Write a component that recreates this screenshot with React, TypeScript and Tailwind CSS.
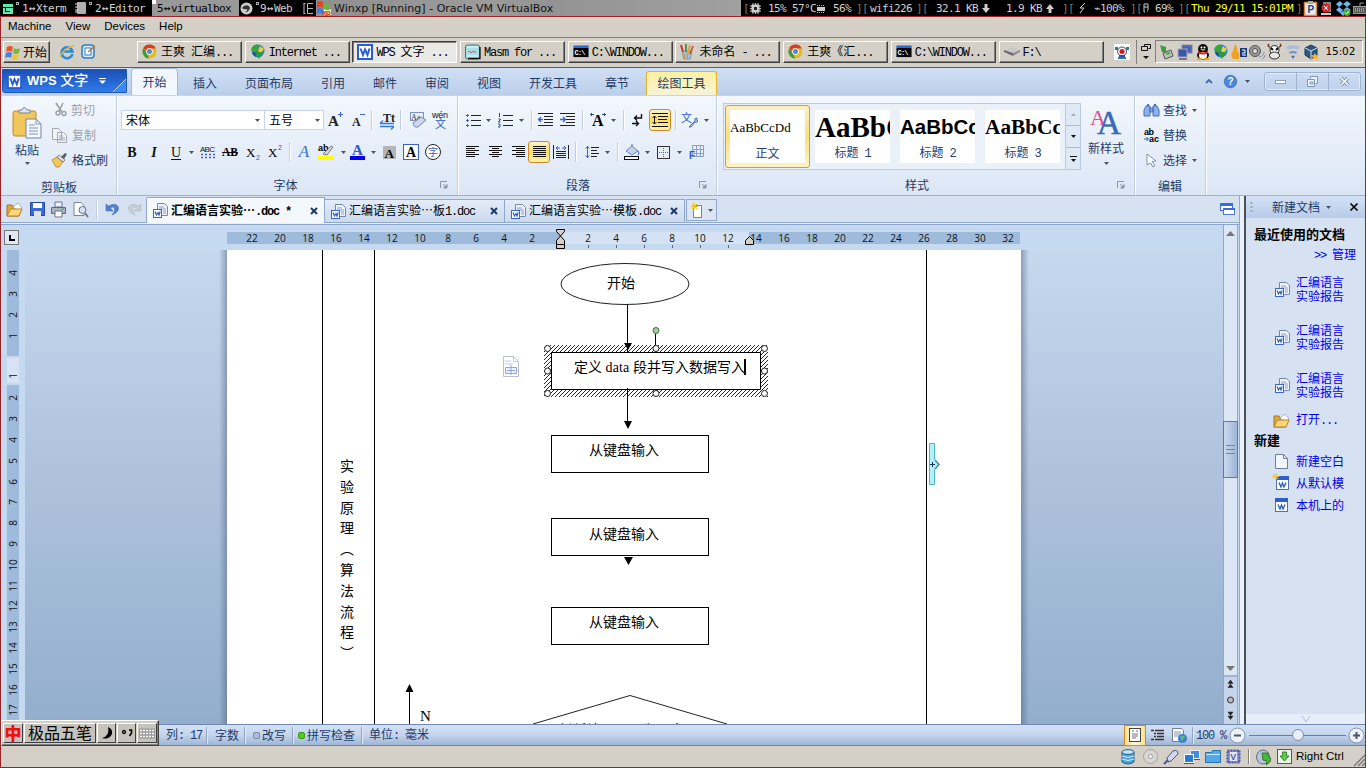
import React from 'react';

type P = { children?: React.ReactNode; className?: string };

/* Mixed CJK / half-width text: ASCII runs are set in a 6px-wide monospace. */
const Zh = ({ t, className = '' }: { t: string; className?: string }) => (
  <span className={`whitespace-pre leading-none shrink-0 text-[12px] font-['Noto_Sans_CJK_SC',sans-serif] ${className}`}>
    {(t.match(/[\x00-\x7f]+|[^\x00-\x7f]+/g) || []).map((r, i) =>
      r.charCodeAt(0) < 128 ? (
        <span key={i} className="font-['Liberation_Mono',monospace] text-[12px] tracking-[-1.2px]">{r}</span>
      ) : (
        <span key={i}>{r}</span>
      ),
    )}
  </span>
);
const Cell = ({ children, className = '' }: P) => <div className={`flex shrink-0 items-center ${className}`}>{children}</div>;
const Ic = ({ w, h, children, className = '' }: P & { w: number; h: number }) => (
  <svg width={w} height={h} viewBox={`0 0 ${w} ${h}`} className={`shrink-0 block overflow-visible ${className}`}>{children}</svg>
);
const Dn = ({ className = '' }: { className?: string }) => (
  <Ic w={5} h={3} className={className}><path d="M0 0h5L2.5 3z" fill="#4b5362" /></Ic>
);
const Sep = ({ className = '' }: { className?: string }) => <div className={`h-[20px] w-[2px] shrink-0 border-l border-[#c3cfe0] bg-white ${className}`} />;
const SERIF = 'Liberation Serif, serif';
const SANS = 'Liberation Sans, sans-serif';

/* ---------- shared icons ---------- */
const Chrome = () => (
  <Ic w={15} h={15}>
    <circle cx="7.5" cy="7.5" r="7" fill="#e0bb22" />
    <path d="M1.4 4A7 7 0 0 1 13.8 4.6H7.5z" fill="#d93a2b" />
    <path d="M1.4 4 5 9.6 7 14.5A7 7 0 0 1 1.4 4z" fill="#3f9b41" />
    <path d="M1.4 4 3 2.4 7.5 7.5H4.6z" fill="#d93a2b" />
    <circle cx="7.5" cy="7.5" r="3.3" fill="#fff" /><circle cx="7.5" cy="7.5" r="2.5" fill="#4a8be0" />
  </Ic>
);
const Globe = () => (
  <Ic w={16} h={15}>
    <circle cx="8" cy="7" r="6.5" fill="#2f7fd0" />
    <path d="M1 5Q4-1 9 1L8 6 4 9z" fill="#3aa63a" /><path d="M10 2l4 3-3 4-3-2z" fill="#f0d030" />
    <path d="M5 8h8L9 15z" fill="#2b9c36" /><path d="M2 9l4 4-1-5z" fill="#174b7c" />
  </Ic>
);
const WIcon = ({ s = 16 }: { s?: number }) => (
  <svg width={s} height={s} viewBox="0 0 16 16" className="block shrink-0">
    <rect width="16" height="16" fill="#2a5bd0" /><rect x="2" y="2" width="12" height="12" fill="#fff" />
    <path d="M3.500 4.500 6 11 8 5.500 10.500 11 12.500 4.500" fill="none" stroke="#2a5bd0" strokeWidth="2" />
  </svg>
);
const Cmd = () => (
  <Ic w={16} h={13}>
    <rect width="16" height="13" fill="#b9c3d0" /><rect x=".5" y=".5" width="15" height="2.500" fill="#2d6bd8" /><rect x=".5" y="3" width="15" height="9" fill="#000" />
    <text x="1.500" y="10" fontSize="7" fontWeight="bold" fill="#fff" fontFamily="Liberation Mono, monospace" textLength="11">C:\</text>
  </Ic>
);
const Note = () => (
  <Ic w={16} h={16}><rect x=".5" y="1" width="14" height="14" rx="2" fill="#a8dfe6" stroke="#3f7480" /><path d="M2 3h11M2 12h11" stroke="#e8fafa" /><path d="M3 8q1-2 2 0t2 0 2 0 2-1" fill="none" stroke="#b56a78" /><path d="M15 3v11.500H3" stroke="#111" fill="none" strokeWidth="1.300" /></Ic>
);
const Paint = () => (
  <Ic w={14} h={16}><path d="M2 7h10l-1.500 8h-7z" fill="#9cc3d8" stroke="#6a8ea3" strokeWidth=".7" /><path d="M3 8 1 1" stroke="#c0402c" strokeWidth="2" /><path d="M6 8V0" stroke="#3f7d3f" strokeWidth="1.600" /><path d="M8 9 10 1" stroke="#e2a33a" strokeWidth="2" /><path d="M10 10l3-8" stroke="#c04a2c" strokeWidth="1.600" /><path d="M4 9l1 6M8 9l-1 6" stroke="#e8862c" /></Ic>
);
const Disk = () => (
  <Ic w={16} h={9}><path d="M0 3 8 0l8 3-7 3z" fill="#c9c9c9" /><path d="M0 3v2l9 4V6z" fill="#6d6d6d" /><path d="M16 3v2L9 9V6z" fill="#8e8e8e" /></Ic>
);
const DocW = () => (
  <Ic w={15} h={15}>
    <path d="M4.500.5h7l3 3v9h-10z" fill="#eef3fc" stroke="#7288b3" /><path d="M6 4h5M6 6h7M10 8h3M10 10h3" stroke="#8aa0c8" />
    <rect x=".5" y="6.500" width="8" height="8" fill="#fff" stroke="#3a67c8" /><path d="M2 8.500l1.500 3.500L5 9.500 6 12l1.200-3.500" fill="none" stroke="#2e5cc4" strokeWidth="1.200" />
  </Ic>
);
const Folder = () => (
  <Ic w={17} h={15}>
    <path d="M1 3h5l1 2h6v9H1z" fill="#e0a73a" stroke="#a4741c" /><path d="M7 5l5-4 4 5-3 4z" fill="#fff" stroke="#8d99ad" strokeWidth=".7" />
    <path d="M1 14 4.500 7H16l-3 7z" fill="#fbd778" stroke="#b98224" />
  </Ic>
);
const Launch = () => <Ic w={8} h={8}><path d="M.5 7V.5H7" fill="none" stroke="#8d96a5" /><path d="M3 3l3 3M7 3.500V7H3.500z" stroke="#8d96a5" fill="#8d96a5" /></Ic>;

/* ---------- host top bar ---------- */
const top = "font-['DejaVu_Sans_Mono',monospace] text-[11px] tracking-[-0.62px] leading-none whitespace-pre text-[#d0d0d0]";
const Lr = () => <span className="inline-block w-[8px] text-center">↔</span>;
const TopBar = () => (
  <div className={`flex h-[16px] shrink-0 items-center overflow-hidden bg-black ${top}`}>
    <Cell className="w-[22px] pl-[3px]"><Ic w={10} h={11}><path d="M0 1h10v3H0zM3 5h7v6H7V8H3zM0 5h2v6H0zM0 9h10v2H0z" fill="#62e8b0" /></Ic><div className="mb-[9px] ml-[3px] h-[3px] w-[3px] border border-[#aaa]" /></Cell>
    <Cell className="w-[53px]">1<Lr />Xterm</Cell>
    <Cell className="w-[20px]"><Ic w={11} h={12}><rect x="2" width="9" height="12" rx="1" fill="#b0b0b0" /><path d="M0 2h3M0 5h3M0 8h3M0 10h3" stroke="#ddd" /></Ic><div className="mb-[9px] ml-[3px] h-[3px] w-[3px] border border-[#aaa]" /></Cell>
    <Cell className="w-[57px]">2<Lr />Editor</Cell>
    <Cell className="h-full w-[87px] bg-[#999] text-black"><div className="mb-[12px] h-[4px] w-[4px] bg-white" /><Cell className="pl-[1px]">5<Lr />virtualbox</Cell></Cell>
    <Cell className="w-[21px] pl-[1px]"><Ic w={13} h={13}><circle cx="6.500" cy="6.500" r="6" fill="#ccc" /><path d="M4 4q5-2 6 2-2 5-5 4 3-1 2-3-3 1-5-1z" fill="#333" /></Ic><div className="mb-[9px] ml-[3px] h-[3px] w-[3px] border border-[#aaa]" /></Cell>
    <Cell className="w-[43px]">9<Lr />Web</Cell>
    <Cell className="w-[13px]"><Ic w={11} h={11}><path d="M1 .5v10M4.500.5v10M4.500.5H10M4.500 5.500H10M4.500 10.500H10M.5.500h2M.5 10.500h2" stroke="#bbb" fill="none" /></Ic></Cell>
    <Cell className="h-full w-[425px] bg-[linear-gradient(90deg,#8f8f8f,#9c9c9c_40%,#939393_55%,#a0a0a0)]">
      <Ic w={16} h={16}><path d="M1 2q3-2 6 0v6q-3-2-6 0z" fill="#e0452c" /><path d="M8 3q3 2 6 0v6q-3 2-6 0z" fill="#6cb33f" /><path d="M1 9q3-2 6 0v5q-3-2-6 0z" fill="#3f7fe0" /><path d="M8 9q3 2 7 0v6H7z" fill="#f5e9c0" /><text x="6" y="15" fontSize="8" fontWeight="bold" fill="#d03018" fontFamily={SANS}>xp</text></Ic>
      <span className="pl-[2px] font-['DejaVu_Sans',sans-serif] text-[11px] tracking-[0.02px] text-[#111]">Winxp [Running] - Oracle VM VirtualBox</span>
    </Cell>
    <Cell className="w-[9px] pl-[2px] text-[#777]">[</Cell>
    <Cell className="w-[18px]"><Ic w={11} h={11}><path d="M3 0v11M5.500 0v11M8 0v11M0 3h11M0 5.500h11M0 8h11" stroke="#bbb" /><rect x="1.500" y="1.500" width="8" height="8" rx="1" fill="#ccc" /><rect x="4" y="4" width="3" height="3" fill="#222" /></Ic></Cell>
    <Cell className="w-[49px]">15% 57°C</Cell>
    <Cell className="w-[16px]"><Ic w={8} h={9}><path d="M0 1.500h8M0 8.500h8" stroke="#bbb" strokeDasharray="1 1" /><rect y="3" width="8" height="4" fill="#ccc" /></Ic></Cell>
    <Cell className="w-[23px]">56%</Cell>
    <Cell className="w-[14px] text-[#777]">][</Cell>
    <Cell className="w-[46px]">wifi226</Cell>
    <Cell className="w-[20px] text-[#777]">][</Cell>
    <Cell className="w-[46px]">32.1 KB</Cell>
    <Cell className="w-[24px]"><Ic w={8} h={9}><path d="M2.500 0h3v4H8L4 9 0 4h2.500z" fill="#ccc" /></Ic></Cell>
    <Cell className="w-[40px]">1.9 KB</Cell>
    <Cell className="w-[16px]"><Ic w={8} h={9}><path d="M2.500 9h3V5H8L4 0 0 5h2.500z" fill="#ccc" /></Ic></Cell>
    <Cell className="w-[17px] text-[#777]">][</Cell>
    <Cell className="w-[15px]"><Ic w={7} h={10}><path d="M6 0 1 5h4L1 10" stroke="#ccc" fill="none" /></Ic></Cell>
    <Cell className="w-[36px]">⌁100%</Cell>
    <Cell className="w-[13px] text-[#777]">][</Cell>
    <Cell className="w-[12px]"><Ic w={6} h={10}><path d="M1 9V1h4v6M1 4h4M1 9h1M4 8h1" stroke="#ccc" fill="none" /></Ic></Cell>
    <Cell className="w-[23px]">69%</Cell>
    <Cell className="w-[13px] text-[#777]">][</Cell>
    <Cell className="w-[105px] text-[#ffff20]">Thu 29/11 15:01PM</Cell>
    <Cell className="w-[8px] text-[#777]">]</Cell>
    <Cell className="gap-[2px]">
      <Ic w={13} h={15}><rect x=".5" y="1.500" width="12" height="13" fill="#e5edf7" stroke="#d8863a" strokeWidth="1.500" /><text x="3.500" y="12" fontSize="10" fontWeight="bold" fill="#23467c" fontFamily={SANS}>P</text><rect x="4" width="5" height="3" fill="#aaa" /></Ic>
      <Ic w={15} h={15}><path d="M4 1h8v10H6z" fill="#8a8a8a" /><circle cx="7" cy="7" r="4.500" fill="#d62828" /><path d="M5 5l4 4M9 5l-4 4" stroke="#fff" /><path d="M2 13h10" stroke="#ccc" strokeWidth="2" /></Ic>
      <Ic w={15} h={15}><path d="M0 3l4-3 3 3-4 3zM7 3l4-3 4 3-4 3zM0 9l3-3 4 3-3 3zM7 9l4-3 4 3-4 3zM4 12l3-2 3 2-3 3z" fill="#6cb8f0" /><circle cx="11" cy="11.500" r="3.500" fill="#49a53a" /><path d="M9 11.500l1.500 1.500 2.500-3" fill="none" stroke="#fff" /></Ic>
      <Ic w={14} h={12}><rect x=".5" y="4.500" width="13" height="7" fill="#555" stroke="#999" /><path d="M2 7h10M2 9h10" stroke="#ddd" strokeDasharray="1 1" /><path d="M7 4V1h4" stroke="#999" fill="none" /></Ic>
    </Cell>
  </div>
);

/* ---------- Windows taskbar ---------- */
const TaskBtn = ({ icon, t, down }: { icon: React.ReactNode; t: string; down?: boolean }) => (
  <div className={`flex h-[22px] w-[105px] shrink-0 items-center border pl-[4px] ${down ? 'border-[#404040] border-b-white border-r-white bg-[#ebe9e5] shadow-[inset_1px_1px_0_#808080]' : 'border-white border-b-[#404040] border-r-[#404040] shadow-[inset_-1px_-1px_0_#808080]'}`}>
    <div className="flex w-[19px] shrink-0 items-center">{icon}</div>
    <Zh t={t} className="text-black" />
  </div>
);
const TaskBar = () => (
  <div className="flex h-[30px] shrink-0 items-center border-t border-[#808080] pl-[2px] pb-[2px]">
    <div className="flex h-[22px] w-[47px] shrink-0 items-center gap-[2px] border border-white border-b-[#404040] border-r-[#404040] pl-[1px] shadow-[inset_-1px_-1px_0_#808080]">
      <Ic w={16} h={14}><path d="M2 2q3-2 6 0l-1 5q-3-2-6 0z" fill="#e5562c" /><path d="M9 3q3 2 6 0l-1 5q-3 2-6 0z" fill="#7ab83c" /><path d="M1 8q3-2 6 0l-1 5q-3-2-6 0z" fill="#4a7fe0" /><path d="M8 9q3 2 6 0l-1 5q-3 2-6 0z" fill="#f2c52c" /></Ic>
      <Zh t="开始" className="text-black" />
    </div>
    <Cell className="ml-[9px] w-[22px]"><Ic w={16} h={15}><path d="M13.500 10A5.500 5.500 0 1 1 13.500 7.500H4" fill="none" stroke="#2b8ad8" strokeWidth="2.600" /><path d="M1 13Q4 4 15 2" fill="none" stroke="#e8b030" strokeWidth="1.300" /></Ic></Cell>
    <Cell className="w-[56px]"><Ic w={16} h={15}><rect x="1" y="1" width="12" height="13" rx="3" fill="#d8ecfa" stroke="#2b7fc8" strokeWidth="1.500" /><rect x="4" y="4" width="6" height="7" fill="#fff" stroke="#2b7fc8" /><path d="M7 8l7-6" stroke="#c07020" strokeWidth="1.500" /></Ic></Cell>
    <div className="flex shrink-0 gap-[2.700px]">
      <TaskBtn icon={<Chrome />} t="王爽 汇编..." />
      <TaskBtn icon={<Globe />} t="Internet ..." />
      <TaskBtn icon={<WIcon />} t="WPS 文字 ..." down />
      <TaskBtn icon={<Note />} t="Masm for ..." />
      <TaskBtn icon={<Cmd />} t="C:\WINDOW..." />
      <TaskBtn icon={<Paint />} t="未命名 - ..." />
      <TaskBtn icon={<Chrome />} t="王爽《汇..." />
      <TaskBtn icon={<Cmd />} t="C:\WINDOW..." />
      <TaskBtn icon={<Disk />} t="F:\" />
    </div>
    <Cell className="ml-[10px] w-[22px]"><Ic w={16} h={16}><rect width="16" height="16" fill="#fff" /><path d="M1 3h3v3H1zM12 3h3v3h-3zM4 13h8v2H4z" fill="#2a7d8c" /><circle cx="8" cy="7.500" r="4.500" fill="#eef" stroke="#555" /><circle cx="8" cy="7.500" r="2.500" fill="#e01818" /><path d="M5 12h6" stroke="#2848c0" strokeWidth="2" /></Ic></Cell>
    <Cell className="h-[24px] w-[18px] border-l border-[#808080] pl-[4px]"><Ic w={10} h={16}><path d="M3.500 2.500V.5h6v4h-2M.5 2.500h6v4h-6z" fill="none" stroke="#111" /><path d="M2 12h6l-3 3z" fill="#111" /></Ic></Cell>
    <div className="ml-[1px] flex h-[23px] w-[208px] shrink-0 items-center gap-[2px] border border-[#808080] border-b-white border-r-white pl-[3px]">
      <Ic w={16} h={16}><path d="M1 1l6 2v5H3z" fill="#3f9b3f" /><path d="M4 9l8-3 2 6-8 3z" fill="#c0c0c0" stroke="#555" /><path d="M7 10l4-1" stroke="#3b3" strokeWidth="2" /></Ic>
      <Ic w={16} h={16}><rect x="5" y="1" width="10" height="8" fill="#4a62b8" stroke="#888" /><rect x="1" y="5" width="9" height="8" fill="#3a55b0" stroke="#aaa" /><path d="M2 15h8" stroke="#777" strokeWidth="2" /></Ic>
      <Ic w={16} h={16}><ellipse cx="8" cy="5" rx="5" ry="5" fill="#111" /><ellipse cx="8" cy="11" rx="6" ry="4.500" fill="#111" /><ellipse cx="8" cy="11.500" rx="4" ry="3.500" fill="#fff" /><path d="M3 7q5 3 10 0v2q-5 3-10 0z" fill="#e02020" /><path d="M5 5h6l-3 2z" fill="#f0a020" /><circle cx="6.500" cy="3.500" r="1" fill="#fff" /><circle cx="9.500" cy="3.500" r="1" fill="#fff" /><path d="M2 15h5M9 15h5" stroke="#f0a020" strokeWidth="2" /></Ic>
      <Globe />
      <Ic w={16} h={16}><path d="M4 0q3 4 2 7 3 1 2 8H2q-3-5 0-8 1-3 2-7z" fill="#f2a020" /><rect x="9" y="4" width="7" height="9" fill="#123a7c" /><path d="M11 6h3v3h-3M11 11h4" stroke="#fff" fill="none" /></Ic>
      <Ic w={16} h={16}><circle cx="6" cy="7" r="5.500" fill="#999" stroke="#555" /><circle cx="6" cy="7" r="2.500" fill="#ddd" stroke="#555" /><path d="M10 13q5-1 5-5M13 15q3-1 3-4" stroke="#8a8fc0" fill="none" /></Ic>
      <Ic w={16} h={16}><path d="M3 3Q0 2 2 0M12 3q3-1 1-3" stroke="#6b3a20" fill="none" strokeWidth="1.500" /><circle cx="7.500" cy="6" r="4.500" fill="#fff" stroke="#222" /><ellipse cx="7.500" cy="11.500" rx="5" ry="3.500" fill="#e8e8e8" stroke="#222" /><path d="M4 4l2 2M11 4l-2 2" stroke="#111" strokeWidth="2" /></Ic>
      <Ic w={16} h={16}><path d="M1 3q7-4 14 0l-2 3q-5-3-10 0z" fill="#a8bfdd" /><path d="M4 8q4-2 8 0l-1 2q-3-2-6 0z" fill="#6f93c8" /><path d="M6 12q2-1 4 0l-2 3z" fill="#4a76b8" /></Ic>
      <Ic w={16} h={16}><path d="M2 4l6-3 6 3v7l-6 4-6-4z" fill="#2d567f" stroke="#173858" /><path d="M2 4l6 3 6-3M8 7v8" stroke="#cfe0f0" fill="none" /><path d="M12 9l1 2 3 .5-2 2 .5 2-2.500-1-2.500 1 .5-2-2-2 3-.500z" fill="#f5b030" /></Ic>
      <span className="ml-[5px] font-['DejaVu_Sans',sans-serif] text-[10.5px] leading-none tracking-[-0.1px] text-black">15:02</span>
    </div>
  </div>
);

/* ---------- WPS title and tab row ---------- */
const Title = () => (
  <div className="flex h-[28px] shrink-0 items-stretch border-t border-[#5b5f68] bg-linear-to-b from-[#cfdff4] to-[#bccfea] pl-[1px]">
    <div className="mt-[1px] flex h-[24px] w-[125px] shrink-0 items-center rounded-bl-[3px] border border-[#1d56b8] bg-linear-to-b from-[#1d4fb4] to-[#2f7cec] pl-[4px]">
      <WIcon s={15} />
      <span className="ml-[5px] mt-[-2px] whitespace-pre font-['Liberation_Sans','Noto_Sans_CJK_SC',sans-serif] text-[13px] font-bold leading-none text-white">WPS <span className="text-[14px] font-medium">文字</span></span>
      <Ic w={7} h={6} className="ml-[11px]"><path d="M0 0h7v1H0zM0 2.500h7L3.500 6z" fill="#fff" /></Ic>
      <Ic w={13} h={13} className="ml-auto mt-[9px]"><path d="M0 13 13 0V13z" fill="#3a8af5" /><path d="M0 13 13 0" stroke="#b8d6fb" /></Ic>
    </div>
    <div className="flex flex-1 items-center text-[#1e3a68]">
      <div className="ml-[4px] mr-[1px] flex h-full w-[47px] items-center justify-center self-end rounded-t-[4px] border border-b-0 border-[#a4bbdc] bg-[#f2f6fd] mt-[5px]"><Zh t="开始" /></div>
      {['插入', '页面布局', '引用', '邮件', '审阅', '视图', '开发工具', '章节'].map((t) => (
        <div key={t} className="flex h-full shrink-0 items-center px-[14px] pt-[2px]"><Zh t={t} /></div>
      ))}
      <div className="ml-[3px] mt-[3px] flex h-[24px] w-[71px] items-center justify-center rounded-t-[3px] border border-b-0 border-[#e0b728] bg-linear-to-b from-[#fdf0a0] to-[#f7f3d8] pb-[2px]"><Zh t="绘图工具" /></div>
      <Ic w={8} h={5} className="ml-auto"><path d="M1 4l3-3 3 3" fill="none" stroke="#4767a8" strokeWidth="1.800" /></Ic>
      <Ic w={13} h={13} className="ml-[11px]"><circle cx="6.500" cy="6.500" r="6.300" fill="#4a86dc" stroke="#2c5fb0" strokeWidth=".6" /><text x="6.500" y="10.300" fontSize="10" fontWeight="bold" textAnchor="middle" fill="#fff" fontFamily={SANS}>?</text></Ic>
      <Dn className="ml-[8px]" />
      <div className="ml-[14px] mr-[4px] flex h-[19px] w-[97px] shrink-0 rounded-[3px] border border-[#9fb2d0] shadow-[inset_0_0_0_1px_#e2ebf8]">
        <div className="flex flex-1 items-center justify-center border-r border-[#9fb2d0]"><Ic w={11} h={4}><rect x=".5" y=".5" width="10" height="3" fill="#fff" stroke="#8ba0c4" /></Ic></div>
        <div className="flex flex-1 items-center justify-center border-r border-[#9fb2d0]"><Ic w={11} h={11}><path d="M3.500 2.500v-2h7v7h-2M.5 3.500h7v7h-7zM3 6h3v2H3z" fill="#fff" fillOpacity=".7" stroke="#8096bd" /></Ic></div>
        <div className="flex flex-1 items-center justify-center"><Ic w={11} h={9}><path d="M2 1l7 7M9 1 2 8" stroke="#7f95bd" strokeWidth="3.600" /><path d="M2 1l7 7M9 1 2 8" stroke="#fff" strokeWidth="1.600" /></Ic></div>
      </div>
    </div>
  </div>
);

/* ---------- ribbon ---------- */
const Hot = ({ children }: P) => <div className="flex h-[22px] w-[22px] items-center justify-center rounded-[3px] border border-[#d08a2a] bg-linear-to-b from-[#fdf3cc] via-[#fbdc66] to-[#fdf0a8]">{children}</div>;
const Group = ({ children, className = '' }: P) => <div className={`flex h-full shrink-0 flex-col border-r border-[#c3cfe0] shadow-[1px_0_0_#fff] ${className}`}>{children}</div>;
const Lines = ({ a }: { a: number[][] }) => <Ic w={13} h={12}>{a.map((l, i) => <path key={i} d={`M${l[0]} ${i * 2 + 0.5}h${l[1]}`} stroke="#111" />)}</Ic>;
const Glyph = ({ c, w, children, f = SERIF, s = 15, b, i, fill = '#111' }: { c: string; w: number; children?: React.ReactNode; f?: string; s?: number; b?: boolean; i?: boolean; fill?: string }) => (
  <Ic w={w} h={16}>{children}<text x={w / 2} y="13" textAnchor="middle" fontSize={s} fontFamily={f} fontWeight={b ? 'bold' : 'normal'} fontStyle={i ? 'italic' : 'normal'} fill={fill}>{c}</text></Ic>
);
const Dent = ({ flip }: { flip?: boolean }) => (
  <Ic w={15} h={14}><path d="M0 .5h15M6 3.500h9M6 6.500h9M6 9.500h9M0 12.500h15" stroke="#222" /><path d={flip ? 'M0 6.500h5M3 4l2.500 2.500L3 9' : 'M1 6.500h4M3 4 .5 6.500 3 9'} stroke="#3c62c8" strokeWidth="1.300" fill="none" /></Ic>
);
const Style = ({ s, n, on, cls }: { s: string; n: string; on?: boolean; cls: string }) => (
  <div className={`flex h-[63px] w-[85px] shrink-0 p-[4px] ${on ? 'rounded-[3px] border border-[#d8973c] bg-linear-to-b from-[#fdf0c4] via-[#fbe07a] to-[#fdf3c4]' : 'border border-transparent'}`}>
    <div className="flex w-[75px] flex-col overflow-hidden bg-white">
      <div className={`flex h-[35px] items-center whitespace-nowrap leading-none text-black ${cls}`}>{s}</div>
      <div className="flex h-[16px] items-center justify-center text-[#26406e]"><Zh t={n} /></div>
    </div>
  </div>
);
const Ribbon = () => (
  <div className="flex h-[101px] shrink-0 border-b border-[#9cb0d0] border-t border-t-[#c7d4e8] bg-linear-to-b from-[#f3f7fd] to-[#dbe6f5] pl-[1px] text-[#1e3a68]">
    <Group className="w-[115px]">
      <div className="flex h-[78px]">
        <div className="flex w-[50px] flex-col items-center pt-[11px]">
          <Ic w={30} h={32}><rect x="1" y="4" width="23" height="25" rx="2" fill="#f2c75a" stroke="#c08a28" /><path d="M7 6V3h3q2-5 5 0h3v3z" fill="#dfe5ee" stroke="#77808f" /><path d="M14 12h10l5 5v14H14z" fill="#f4f8fe" stroke="#7085a8" /><path d="M24 12v5h5M17 18h6M17 21h9M17 24h9M17 27h9" stroke="#7b93bd" fill="none" /></Ic>
          <Zh t="粘贴" className="mt-[5px]" /><Dn className="mt-[6px]" />
        </div>
        <div className="flex flex-col gap-[13px] pt-[8px]">
          <Cell className="h-[12px] gap-[5px] text-[#9a9fa8]"><Ic w={14} h={14} className="ml-[2px] mr-[-2px]"><path d="M2 0l6 9M9 0 5 8" stroke="#9a9fa8" strokeWidth="1.600" /><circle cx="4" cy="10" r="2" fill="none" stroke="#9a9fa8" strokeWidth="1.400" /><circle cx="10" cy="10.500" r="2" fill="none" stroke="#9a9fa8" strokeWidth="1.400" /></Ic><Zh t="剪切" /></Cell>
          <Cell className="h-[12px] gap-[5px] text-[#9a9fa8]"><Ic w={15} h={15}><path d="M.5.500h6l3 3v8h-9zM5.500 4.500h6l3 3v7h-9z" fill="#f0f3f8" stroke="#a4a9b3" /><path d="M7 8h4M7 10h6M7 12h6" stroke="#a4a9b3" /></Ic><Zh t="复制" /></Cell>
          <Cell className="h-[12px] gap-[5px]"><Ic w={15} h={15}><path d="M0 7l5-3 6 5-4 5-3 0z" fill="#f4c75a" stroke="#b07d28" strokeWidth=".8" /><path d="M5 4l2-2 6 5-2 2z" fill="#e4e8ee" stroke="#555" strokeWidth=".7" /><path d="M9 4l4-4 2 1-3 5z" fill="#555e70" /></Ic><Zh t="格式刷" /></Cell>
        </div>
      </div>
      <div className="flex h-[20px] items-center justify-center pt-[5px]"><Zh t="剪贴板" /></div>
    </Group>
    <Group className="w-[341px] pt-[13px]">
      <div className="flex h-[22px] items-center pl-[4px]">
        <div className="flex h-[20px] w-[144px] items-center justify-between border border-[#c7d4e8] bg-white pl-[4px] pr-[4px] text-black"><Zh t="宋体" /><Dn /></div>
        <div className="mr-[4px] flex h-[20px] w-[59px] items-center justify-between border border-l-0 border-[#c7d4e8] bg-white pl-[4px] pr-[3px] text-black"><Zh t="五号" /><Dn /></div>
        <Cell className="w-[24px]"><Ic w={15} h={16}><text x="0" y="14" fontSize="15" fontWeight="bold" fontFamily={SERIF} fill="#222">A</text><path d="M10 2.500h5M12.500 0v5" stroke="#3c62c8" /></Ic></Cell>
        <Cell className="w-[19px]"><Ic w={14} h={16}><text x="0" y="14" fontSize="12" fontWeight="bold" fontFamily={SERIF} fill="#222">A</text><path d="M8 2.500h5" stroke="#3c62c8" /></Ic></Cell>
        <Sep className="mr-[7px]" />
        <Cell className="w-[20px]"><Ic w={15} h={16}><text x="3" y="10" fontSize="12" fontWeight="bold" fontFamily={SERIF} fill="#222">Tt</text><path d="M0 11.500h14M3 8.500l-3 3M14 14.500H0M11 17.500l3-3" stroke="#2f7ae0" strokeWidth="1.300" fill="none" /></Ic></Cell>
        <Sep className="mr-[8px]" />
        <Cell className="w-[22px]"><Ic w={17} h={16}><rect x=".5" y=".5" width="13" height="8" fill="#e8eefa" stroke="#7c93c4" /><text x="1" y="8" fontSize="8" fontFamily={SERIF} fill="#234">Aa</text><path d="M3 11l8-6 5 3-8 7q-4 1-5-4z" fill="#cdd8ee" stroke="#6d84b4" /></Ic></Cell>
        <Ic w={17} h={17}><text x="0" y="6" fontSize="9" fontFamily={SANS} fill="#111" textLength="16">wén</text><text x="3" y="16" fontSize="11" fontFamily="Noto Sans CJK SC" fill="#2f5ac8">文</text></Ic>
      </div>
      <div className="mt-[10px] flex h-[22px] items-center pl-[8px]">
        <Cell className="w-[22px]"><Glyph c="B" w={14} b s={14} /></Cell>
        <Cell className="w-[22px]"><Glyph c="I" w={14} b i s={14} /></Cell>
        <Cell className="w-[20px]"><Glyph c="U" w={14} s={14}><path d="M2 15.500h10" stroke="#111" /></Glyph></Cell>
        <Dn /><Cell className="ml-[6px] w-[22px]"><Ic w={16} h={14}><text x="0" y="7" fontSize="8" fontFamily={SANS} fill="#111" textLength="15">ABC</text><path d="M1 9.500h14M1 12.500h14" stroke="#3c62c8" strokeWidth="1.300" strokeDasharray="2 2" /></Ic></Cell>
        <Cell className="w-[24px]"><Ic w={16} h={14}><text x="0" y="11" fontSize="11.500" fontWeight="bold" fontFamily={SERIF} textLength="16">AB</text><path d="M0 7.500h16" stroke="#111" /></Ic></Cell>
        <Cell className="w-[22px]"><Ic w={14} h={14}><text x="0" y="12" fontSize="13" fontFamily={SERIF}>X</text><text x="10" y="15" fontSize="7" fontFamily={SANS} fill="#2f5ac8">2</text></Ic></Cell>
        <Cell className="w-[21px]"><Ic w={14} h={14}><text x="0" y="12" fontSize="13" fontFamily={SERIF}>X</text><text x="10" y="5" fontSize="7" fontFamily={SANS} fill="#2f5ac8">2</text></Ic></Cell>
        <Sep className="mr-[7px]" />
        <Cell className="w-[20px]"><Glyph c="A" w={12} i s={17} fill="#3a6fd0" /></Cell>
        <Cell className="w-[23px]"><Ic w={16} h={16}><text x="0" y="7" fontSize="9" fontWeight="bold" fontFamily={SANS}>ab</text><path d="M5 10l8-8 2 1-6 8z" fill="#cfd6e2" stroke="#555" strokeWidth=".7" /><path d="M0 12h16v4H0z" fill="#ffff00" /></Ic></Cell>
        <Dn /><Cell className="ml-[4px] w-[21px]"><Ic w={15} h={16}><text x="2" y="11" fontSize="15" fontWeight="bold" fontFamily={SERIF} fill="#2f5ac8">A</text><path d="M0 12h15v4H0z" fill="#0000f0" /></Ic></Cell>
        <Dn /><Cell className="ml-[7px] w-[20px]"><Ic w={13} h={15}><path d="M0 1h13v13H0z" fill="#b5b5b5" /><text x="1.500" y="13" fontSize="13" fontWeight="bold" fontFamily={SERIF}>A</text></Ic></Cell>
        <Cell className="w-[22px]"><Ic w={16} h={16}><rect x=".5" y=".5" width="15" height="15" fill="#fff" stroke="#3c62c8" /><text x="3" y="13" fontSize="14" fontWeight="bold" fontFamily={SERIF}>A</text></Ic></Cell>
        <Ic w={16} h={16}><circle cx="8" cy="8" r="7.500" fill="#fff" stroke="#222" /><text x="3" y="12" fontSize="10" fontFamily="Noto Sans CJK SC" fill="#2f5ac8">字</text></Ic>
      </div>
      <div className="mt-auto flex h-[20px] items-center"><div className="flex flex-1 justify-center pl-[14px]"><Zh t="字体" /></div><div className="mr-[9px]"><Launch /></div></div>
    </Group>
    <Group className="w-[259px] pt-[13px]">
      <div className="flex h-[22px] items-center pl-[8px]">
        <Cell className="w-[20px]"><Ic w={15} h={12}><path d="M5 1.500h10M5 6.500h10M5 11.500h10" stroke="#222" /><path d="M0 1.500h3M0 6.500h3M0 11.500h3M1.500 0v3M1.500 5v3M1.500 10v3" stroke="#3c62c8" /></Ic></Cell><Dn />
        <Cell className="ml-[7px] w-[21px]"><Ic w={15} h={12}><path d="M5 1.500h10M5 6.500h10M5 11.500h10" stroke="#222" /><path d="M1.500-1v4M.5 5h2l-2 3h2M0 10h2v3H0" stroke="#2a4a90" fill="none" /></Ic></Cell><Dn />
        <Sep className="ml-[7px] mr-[5px]" />
        <Cell className="w-[22px]"><Dent /></Cell><Cell className="w-[22px]"><Dent flip /></Cell>
        <Sep className="mr-[6px]" />
        <Cell className="w-[21px]"><Ic w={16} h={14}><text x="2" y="13" fontSize="16" fontWeight="bold" fontFamily={SERIF}>A</text><path d="M0 1.500h4M1.500 0v3M12 1.500h4M14.500 0v3" stroke="#2a4a90" /></Ic></Cell><Dn />
        <Sep className="ml-[7px] mr-[7px]" />
        <Cell className="w-[17px]"><Ic w={10} h={13}><path d="M9.500 0v4H3M5 1.500 2.500 4 5 6.500M0 9.500h6M4 7l2.500 2.500L4 12" stroke="#111" fill="none" strokeWidth="1.400" /></Ic></Cell>
        <Hot><Ic w={16} h={14}><path d="M0 .5h16M6 3.500h10M6 6.500h9M6 9.500h10M0 13.500h16" stroke="#111" /><path d="M2.500 3v8M.5 5l2-2 2 2M.5 9l2 2 2-2" stroke="#111" fill="none" /></Ic></Hot>
        <Sep className="ml-[4px] mr-[5px]" />
        <Cell className="w-[22px]"><Ic w={17} h={16}><text x="-1" y="10" fontSize="11" fontFamily="Noto Sans CJK SC" fill="#2f5ac8">文</text><path d="M7 15l6-6q-1-3 2-3-1 3 1 3-1 2-3 1l-4 5z" fill="#c4d2ea" stroke="#4d6da8" /></Ic></Cell><Dn />
      </div>
      <div className="mt-[10px] flex h-[22px] items-center pl-[8px]">
        <Cell className="w-[23px]"><Lines a={[[0, 13], [0, 9], [0, 13], [0, 9], [0, 13], [0, 9]]} /></Cell>
        <Cell className="w-[23px]"><Lines a={[[0, 13], [3, 7], [0, 13], [3, 7], [0, 13], [3, 7]]} /></Cell>
        <Cell className="w-[16px]"><Lines a={[[0, 13], [4, 9], [0, 13], [4, 9], [0, 13], [4, 9]]} /></Cell>
        <Hot><Lines a={[[0, 13], [0, 13], [0, 13], [0, 13], [0, 13], [0, 13]]} /></Hot>
        <Cell className="ml-[3px] w-[22px]"><Ic w={16} h={14}><path d="M.5 0v14M15.500 0v14M3 6.500h10M3 8.500h10M3 10.500h10M3 12.500h10" stroke="#222" /><path d="M3 3h4M9 3h4M5 1 3 3l2 2M11 1l2 2-2 2" stroke="#3c62c8" fill="none" /></Ic></Cell>
        <Sep className="mr-[8px]" />
        <Cell className="w-[20px]"><Ic w={14} h={12}><path d="M6 1.500h8M6 4.500h6M6 7.500h8M6 10.500h6" stroke="#222" /><path d="M2.500 0v12M.5 2.500l2-2 2 2M.5 9.500l2 2 2-2" stroke="#3c62c8" fill="none" /></Ic></Cell><Dn />
        <Sep className="ml-[7px] mr-[5px]" />
        <Cell className="w-[21px]"><Ic w={16} h={16}><path d="M2 7l6-5 6 5-6 4z" fill="#c4d2ea" stroke="#6d84b4" /><path d="M8 2V0M14 7q2 2 0 4" stroke="#3c62c8" fill="none" /><rect x=".5" y="12.500" width="14" height="3" fill="#fff" stroke="#111" /></Ic></Cell><Dn />
        <Cell className="ml-[7px] w-[20px]"><Ic w={13} h={13}><rect x=".5" y=".5" width="12" height="12" fill="none" stroke="#333" /><path d="M6.500 2v10M2 6.500h10" stroke="#666" strokeDasharray="1 1" /></Ic></Cell><Dn />
        <Ic w={16} h={14} className="ml-[7px]"><path d="M3.500.5h11v11h-11zM3 4.500h12M3 8.500h12M7.500 0v12M11.500 0v12" fill="#e9eefa" stroke="#8ba0c8" /><text x="0" y="14" fontSize="10" fontWeight="bold" fontFamily={SANS} fill="#2f5ac8">F</text></Ic>
      </div>
      <div className="mt-auto flex h-[20px] items-center"><div className="flex flex-1 justify-center"><Zh t="段落" className="-ml-[1px]" /></div><div className="mr-[9px]"><Launch /></div></div>
    </Group>
    <Group className="w-[418px] pt-[7px]">
      <div className="flex">
        <div className="ml-[6px] flex h-[67px] w-[358px] border border-[#b9c9e2] bg-[#ebf1f9]">
          <div className="flex w-[342px] pl-px pt-px">
            <Style s="AaBbCcDd" n="正文" on cls="font-['Liberation_Serif',serif] text-[13px]" />
            <Style s="AaBbCcDd" n="标题 1" cls="font-['Liberation_Serif',serif] text-[29px] font-bold" />
            <Style s="AaBbCcDd" n="标题 2" cls="font-['Liberation_Sans',sans-serif] text-[20.500px] font-bold" />
            <Style s="AaBbCcDd" n="标题 3" cls="font-['Liberation_Serif',serif] text-[21.300px] font-bold" />
          </div>
          <div className="flex w-[15px] flex-col border-l border-[#b9c9e2] bg-[#dfe9f6]">
            <div className="flex flex-1 items-center justify-center"><Ic w={5} h={3}><path d="M0 3h5L2.500 0z" fill="#a5adba" /></Ic></div>
            <div className="flex flex-1 items-center justify-center border-y border-[#a9bcda]"><Ic w={5} h={3}><path d="M0 0h5L2.500 3z" fill="#111" /></Ic></div>
            <div className="flex flex-1 items-center justify-center"><Ic w={7} h={6}><path d="M0 .5h7" stroke="#111" /><path d="M1 3h5L3.500 6z" fill="#111" /></Ic></div>
          </div>
        </div>
        <div className="flex w-[50px] flex-col items-center pt-[6px]">
          <Ic w={30} h={25}><text x="-1" y="16" fontSize="22" fontFamily={SERIF} fill="#d8508c">A</text><text x="6" y="25" fontSize="33" fontFamily={SERIF} fill="#3a69b4" stroke="#3a69b4" strokeWidth=".5" textLength="24" lengthAdjust="spacingAndGlyphs">A</text></Ic>
          <Zh t="新样式" className="mt-[8px]" /><Dn className="mt-[8px]" />
        </div>
      </div>
      <div className="mt-auto flex h-[20px] items-center"><div className="flex flex-1 justify-center"><Zh t="样式" /></div><div className="mr-[9px]"><Launch /></div></div>
    </Group>
    <Group className="w-[71px]">
      <div className="flex h-[78px] flex-col gap-[13px] pl-[9px] pt-[8px]">
        <Cell className="h-[12px]"><Ic w={15} h={14}><path d="M2 3h4v10H0V7zM13 3H9v10h6V7zM6 5h3v4H6z" fill="#8fb0e8" stroke="#4470b8" /><path d="M3 1h2v2H3zM10 1h2v2h-2z" fill="#4470b8" /></Ic><Zh t="查找" className="ml-[4px] mr-[5px]" /><Dn /></Cell>
        <Cell className="h-[12px]"><Ic w={15} h={15}><text x="0" y="7" fontSize="9" fontWeight="bold" fontFamily={SANS} textLength="10">ab</text><path d="M0 11h4M2.500 9l2 2-2 2" stroke="#2a5aa8" fill="none" /><text x="5" y="14" fontSize="9" fontWeight="bold" fontFamily={SANS} textLength="10">ac</text></Ic><Zh t="替换" className="ml-[4px]" /></Cell>
        <Cell className="h-[12px]"><Ic w={15} h={14}><path d="M3 1l9 7-4 .5 3 4-2 1.500-2.500-4L3 12z" fill="#fff" stroke="#8494b4" /></Ic><Zh t="选择" className="ml-[4px] mr-[5px]" /><Dn /></Cell>
      </div>
      <div className="flex h-[20px] items-center justify-center pt-[4px]"><Zh t="编辑" /></div>
    </Group>
  </div>
);

/* ---------- document tabs ---------- */
const DocTab = ({ t, on }: { t: string; on?: boolean }) => (
  <div className={`flex shrink-0 items-center border border-b-0 border-[#8fa8cc] pl-[6px] pr-[6px] ${on ? 'mt-[1px] h-[26px] w-[179px] rounded-tl-[2px] bg-[#f4f8fd]' : 'mt-[3px] h-[23px] w-[180px] border-l-0 bg-linear-to-b from-[#e3ecf8] to-[#ccdaee]'}`}>
    <DocW /><Zh t={t} className={`ml-[3px] text-black ${on ? 'font-bold' : ''}`} />
    <Ic w={8} h={8} className="ml-auto"><path d="M1 1l6 6M7 1 1 7" stroke="#1e3a68" strokeWidth="2" /></Ic>
  </div>
);
const DocTabs = () => (
  <div className="flex h-[29px] shrink-0 flex-col border-b border-[#8ba4c8] bg-[#e9f0fa]">
    <div className="flex h-[27px] items-start border-b border-[#8fa8cc] bg-[#d6e1f1] pl-[5px]">
      <div className="flex h-[26px] w-[140px] shrink-0 items-center">
        <Cell className="w-[24px]"><Folder /></Cell>
        <Cell className="w-[21px]"><Ic w={15} h={14}><path d="M.5.500h14v13h-14z" fill="#3c6cd8" stroke="#2548a0" /><path d="M3 1h9v5H3z" fill="#fff" /><path d="M4 9h7v5H4z" fill="#dfe6f2" /></Ic></Cell>
        <Cell className="w-[22px]"><Ic w={15} h={15}><path d="M4 0h7v5H4z" fill="#eef3fb" stroke="#66758f" /><path d="M.5 5.500h14v6H.5z" fill="#a9b4c4" stroke="#5b6880" /><path d="M4 9h7v6H4z" fill="#fff" stroke="#66758f" /><path d="M11 7h2" stroke="#2fae3f" /></Ic></Cell>
        <Cell className="w-[23px]"><Ic w={16} h={15}><path d="M1 .5h7l3 3v10H1z" fill="#fff" stroke="#77849c" /><circle cx="9.500" cy="8" r="3.500" fill="#cfe0f8" stroke="#68758c" /><path d="M12 11l3 4" stroke="#68758c" strokeWidth="1.800" /></Ic></Cell>
        <Sep className="mr-[8px]" />
        <Cell className="w-[22px]"><Ic w={13} h={12}><path d="M0 1v7h7L4.500 5.500Q7 3 8.500 5q1 3-2.500 7 7-3 6.500-7.500Q10-1 2.500 3z" fill="#5580cc" stroke="#3a62ac" strokeWidth=".5" /></Ic></Cell>
        <Ic w={13} h={12}><path d="M13 1v7H6l2.500-2.500Q6 3 4.500 5q-1 3 2.500 7Q0 9 .5 4.500 3-1 10.500 3z" fill="#c8ced8" stroke="#a4adbb" strokeWidth=".5" /></Ic>
      </div>
      <DocTab t="汇编语言实验⋯.doc *" on />
      <DocTab t="汇编语言实验⋯板1.doc" />
      <DocTab t="汇编语言实验⋯模板.doc" />
      <div className="ml-[1px] mt-[3px] flex h-[22px] w-[31px] items-center border border-[#8fa8cc] bg-[#dbe5f4] pl-[4px]">
        <Ic w={14} h={15}><path d="M2.500 2.500h8v12h-8z" fill="#fff" stroke="#74859f" /><path d="M3 0v7M0 3.500h7M1 1l5 5M6 1 1 6" stroke="#f0c020" /></Ic><Dn className="ml-[3px]" />
      </div>
      <Ic w={16} h={12} className="ml-auto mr-[3px] mt-[7px]"><rect x=".5" y=".5" width="12" height="7" fill="#fff" stroke="#3c6cd8" /><path d="M0 1.500h13" stroke="#3c6cd8" strokeWidth="3" /><rect x="3.500" y="5.500" width="11" height="6" fill="#fff" stroke="#4c7ad8" /><path d="M3 6h12" stroke="#3c6cd8" strokeWidth="2" /></Ic>
    </div>
  </div>
);

/* ---------- document area ---------- */
const Box = ({ y }: { y: number }) => <rect x="551.500" y={y + 0.5} width="157" height="37" fill="#fff" stroke="#000" />;
const zhDoc = "absolute whitespace-pre leading-none text-[14px] text-black font-['Noto_Sans_CJK_SC',sans-serif]";
const Page = () => (
  <div className="relative h-[474px] w-[794px] shrink-0 overflow-hidden bg-white">
    <svg width="794" height="474" viewBox="227 250 794 474" className="absolute left-0 top-0">
      <defs><pattern id="hatch" width="4" height="4" patternUnits="userSpaceOnUse"><rect width="4" height="4" fill="#fff" /><path d="M-1 1 1-1M0 4 4 0M3 5 5 3" stroke="#000" strokeWidth=".85" /></pattern></defs>
      <path d="M322.500 250v474M374.500 250v474M926.500 250v474" stroke="#000" />
      <ellipse cx="625" cy="284" rx="64" ry="20.500" fill="none" stroke="#222" />
      <path d="M627.500 304.500V345M655.500 334v12" stroke="#000" />
      <path d="M544 345h224v52H544z" fill="url(#hatch)" />
      <path d="M551.500 352.500h209v37h-209z" fill="#fff" stroke="#000" />
      <path d="M624 343h8l-4 7zM624 421h8l-4 8zM624 557h9l-4.500 8zM405.500 692h8l-4-8z" fill="#000" />
      <path d="M627.500 388v35M627.500 346v6M409.500 690v34" stroke="#000" />
      <circle cx="656" cy="330.500" r="3" fill="#8be08b" stroke="#704a78" />
      {[[547.5, 348.5], [656, 348.5], [764.5, 348.5], [547.5, 371], [764.5, 371], [547.5, 393.5], [656, 393.5], [764.5, 393.5]].map(([x, y]) => <circle key={`${x},${y}`} cx={x} cy={y} r="3" fill="#fff" stroke="#222" />)}
      <Box y={435} /><Box y={518} /><Box y={607} />
      <path d="M533 724 630 695.500 727 724" fill="none" stroke="#222" />
      <path d="M745 359v16" stroke="#000" strokeWidth="2" />
      <path d="M503.500 356.500h10l5 5v15h-15z" fill="#fff" stroke="#b8c0d8" /><path d="M513.500 356.500v5h5M505 361h6M505 364h8" stroke="#c4cbe0" fill="none" /><path d="M505.500 367.500h11v6h-11zM511 365v10M507 370.500h8" stroke="#8fa6e0" fill="#eef2fc" />
    </svg>
    <div className="absolute left-[113px] top-[205px] flex w-[14px] flex-col items-center text-[14px] font-['Noto_Sans_CJK_SC',sans-serif] text-black">
      {'实验原理︵算法流程︶'.split('').map((c, i) => <span key={i} className="h-[20.800px] leading-[20.800px]">{c}</span>)}
    </div>
    <span className={`${zhDoc} left-[380px] top-[25px]`}>开始</span>
    <span className={`${zhDoc} left-[347px] top-[109px]`}>定义<span className="font-['Liberation_Serif',serif] tracking-[0.1px]"> data </span>段并写入数据写入</span>
    <span className={`${zhDoc} left-[362px] top-[192px]`}>从键盘输入</span>
    <span className={`${zhDoc} left-[362px] top-[276px]`}>从键盘输入</span>
    <span className={`${zhDoc} left-[362px] top-[364px]`}>从键盘输入</span>
    <span className={`${zhDoc} left-[331px] top-[472px]`}>判断结果是否为一大</span>
    <span className="absolute left-[193px] top-[459px] font-['Liberation_Serif',serif] text-[15px] leading-none text-black">N</span>
  </div>
);
const VNum = ({ n }: { n: number }) => <div className="flex h-[20.800px] shrink-0 items-center justify-center"><span className="-rotate-90 leading-none">{n}</span></div>;
const rulerFont = "font-['Open_Sans',sans-serif] text-[10px] text-[#111]";
const DocArea = () => (
  <div className="relative flex h-[499px] shrink-0 bg-[#c5d9f0]">
    <div className={`flex w-[24px] shrink-0 flex-col pl-[3px] pt-[5px] ${rulerFont}`}>
      <div className="flex h-[15px] w-[15px] items-center justify-center border border-[#777] bg-[#dde8f6]"><Ic w={6} h={6}><path d="M1 0v5h5" fill="none" stroke="#000" strokeWidth="2" /></Ic></div>
      <div className="ml-[3px] mt-[5px] flex h-[106px] w-[12px] flex-col bg-[#9ebbdb] pt-[13px]">{[4, 3, 2, 1].map((n) => <VNum key={n} n={n} />)}</div>
      <div className="ml-[3px] mt-[2px] flex h-[25px] w-[12px] flex-col bg-[#d7e3f4] pt-[8px]"><VNum n={1} /></div>
      <div className="ml-[3px] mt-[2px] flex h-[339px] w-[12px] flex-col overflow-hidden bg-[#9ebbdb] pt-[3px]">{Array.from({ length: 16 }, (_, i) => <VNum key={i} n={i + 2} />)}</div>
    </div>
    <div className="flex w-[1198px] shrink-0 flex-col">
      <div className="h-[25px] shrink-0 pl-[202px] pt-[7px]">
        <div className={`relative flex h-[12px] w-[793px] items-center bg-[linear-gradient(to_right,#9ebbdb_334px,#d5e2f3_334px,#d5e2f3_522px,#9ebbdb_522px)] pl-[11px] ${rulerFont}`}>
          {Array.from({ length: 28 }, (_, i) => i * 2 - 22).map((n) => <span key={n} className="w-[28px] shrink-0 pb-[1px] text-center leading-none">{n === 0 ? '' : Math.abs(n)}</span>)}
          <svg width="200" height="22" viewBox="0 0 200 22" className="absolute left-[329px] top-[-3px]">
            <path d="M.500.500h8v2l-4 4.500-4-4.500zM.500 11.500 4.500 7l4 4.500v4h-8zM.500 15.500h8v4h-8z" fill="#d4d0c8" stroke="#000" />
            <path d="M32.500 16v3M60.500 16v3M88.500 16v3M116.500 16v3M144.500 16v3M172.500 16v3" stroke="#667" />
            <path d="M189.500 15.500v-4l4-4 4 4v4z" fill="#d4d0c8" stroke="#000" />
          </svg>
        </div>
      </div>
      <div className="flex h-[474px] bg-linear-to-b from-[#c5d8ee] via-[#adc1dc] to-[#93aecd]">
        <div className="w-[202px] bg-[linear-gradient(to_left,rgba(70,90,120,.45),transparent_8px)]" />
        <Page />
        <div className="flex-1 bg-[linear-gradient(to_right,rgba(70,90,120,.45),transparent_8px)]" />
      </div>
    </div>
    <div className="flex w-[15px] shrink-0 flex-col items-center border-x border-[#8fa8cc] bg-[#dce7f5]">
      <Ic w={9} h={5} className="mt-[6px]"><path d="M0 5h9L4.500 0z" fill="#777" /></Ic>
      <div className="mt-[185px] flex h-[57px] w-[15px] flex-col items-center justify-center gap-[3px] border border-[#62799f] bg-linear-to-r from-[#cbd9ee] to-[#9fb6d8]"><i className="h-px w-[9px] bg-[#6784b4]" /><i className="h-px w-[9px] bg-[#6784b4]" /><i className="h-px w-[9px] bg-[#6784b4]" /></div>
      <Ic w={9} h={5} className="mt-[188px]"><path d="M0 0h9L4.500 5z" fill="#777" /></Ic>
      <div className="mt-[4px] flex flex-1 w-full flex-col items-center border-t-2 border-[#9fb2d0] bg-[#c4d4eb]">
        <Ic w={7} h={40} className="mt-[2px]"><path d="M1 4.500h5L3.500 1zM1 8.500h5L3.500 5zM1 33h5l-2.500 3.500zM1 37h5l-2.500 3.500z" fill="#222" stroke="#222" strokeWidth=".5" /><circle cx="3.500" cy="21" r="3" fill="#bbb" stroke="#333" /></Ic>
      </div>
    </div>
    <Ic w={12} h={42} className="absolute left-[928px] top-[218px]"><path d="M.5.500h5v16l5 5-5 5v15h-5z" fill="#b4f0fa" stroke="#4fb4c4" /><path d="M6 17l4 4.500L6 26" stroke="#4a8aa8" fill="none" strokeWidth="1.500" /><path d="M1 21.500h5M3.500 19v5" stroke="#123a60" /></Ic>
  </div>
);

/* ---------- task pane ---------- */
const Link = ({ icon, children, className = '' }: P & { icon: React.ReactNode }) => (
  <div className={`flex items-center pl-[29px] text-[#0000f0] ${className}`}><div className="flex w-[21px] shrink-0 items-center">{icon}</div>{children}</div>
);
const NewW = ({ star }: { star?: boolean }) => <Ic w={14} h={14}><rect x=".5" y=".5" width="12" height="13" fill="#fff" stroke="#5870a8" /><rect width="13" height="4" fill="#2c5fd0" /><path d="M3 6.500l2 4.500 1.500-4 1.500 4 2-4.500" stroke="#2c5fd0" strokeWidth="1.400" fill="none" />{star && <path d="M0-3v7M-4 .500h7M-3-2l5 5M2-2l-5 5" stroke="#f2c530" />}</Ic>;
const Pane = () => (
  <div className="flex w-[126px] shrink-0 border-l border-[#8fa8cc] bg-[#eaf1fb] pl-[4px]">
    <div className="flex w-[121px] flex-col border-l-2 border-[#4b4f58] bg-[#d6e2f2]">
      <div className="flex h-[22px] items-center bg-linear-to-b from-[#d3e1f5] to-[#b7cce9] text-[#1e3a68]">
        <Ic w={3} h={11} className="ml-[4px]"><path d="M1.500 0v11" stroke="#9aa" strokeWidth="2" strokeDasharray="2 2" /></Ic>
        <Zh t="新建文档" className="-mt-[1px] ml-[19px]" /><Dn className="ml-[6px]" /><Ic w={8} h={8} className="ml-[19px]"><path d="M.5.500l7 7M7.500.500l-7 7" stroke="#000" strokeWidth="1.700" /></Ic>
      </div>
      <Zh t="最近使用的文档" className="ml-[8px] mt-[9px] text-[13px] font-bold text-black" />
      <Zh t=">> 管理" className="mr-[9px] mt-[8px] self-end text-[#0000f0]" />
      {[0, 1, 2].map((i) => (
        <Link key={i} icon={<DocW />} className={i === 0 ? 'mt-[13px] h-[28px]' : 'mt-[20px] h-[28px]'}>
          <div className="-mt-[1px] flex flex-col gap-[2px]"><Zh t="汇编语言" /><Zh t="实验报告" /></div>
        </Link>
      ))}
      <Link icon={<div className="-ml-[2px]"><Folder /></div>} className="mt-[13px] h-[16px]"><Zh t="打开..." /></Link>
      <Zh t="新建" className="ml-[8px] mt-[5px] text-[13px] font-bold text-black" />
      <Link icon={<Ic w={13} h={15}><path d="M.5.500h8l4 4v10H.500z" fill="#f2f7fd" stroke="#6f7f98" /><path d="M8.500.500v4h4" fill="none" stroke="#6f7f98" /></Ic>} className="mt-[7px] h-[16px]"><Zh t="新建空白" className="-mt-[1px]" /></Link>
      <Link icon={<div className="ml-[1px]"><NewW star /></div>} className="mt-[6px] h-[16px]"><Zh t="从默认模" className="-mt-[1px]" /></Link>
      <Link icon={<NewW />} className="mt-[6px] h-[16px]"><Zh t="本机上的" className="-mt-[1px]" /></Link>
      <div className="mt-auto flex h-[10px] items-center justify-center bg-[#e6eef9]"><Ic w={8} h={6}><path d="M0 0l4 6 4-6" fill="none" stroke="#a8bfe0" /></Ic></div>
    </div>
  </div>
);

/* ---------- status bars ---------- */
const SSep = ({ className = '' }: { className?: string }) => <div className={`h-[17px] w-[2px] shrink-0 border-l border-[#8fa5c6] bg-[#dfe9f7] ${className}`} />;
const ImeBtn = ({ children, className = '' }: P) => <div className={`flex h-[20px] items-center justify-center border border-white border-b-[#404040] border-r-[#404040] bg-[#c6c3bc] ${className}`}>{children}</div>;
const Round = ({ plus }: { plus?: boolean }) => <Ic w={17} h={17}><circle cx="8.500" cy="8.500" r="7.500" fill="#edf2fa" stroke="#8291ad" /><path d={plus ? 'M5 8.500h7M8.500 5v7' : 'M5 8.500h7'} stroke="#4c5668" strokeWidth="2" /></Ic>;
const Status = () => (
  <div className="relative flex h-[22px] shrink-0 items-center border-b border-[#6b84a8] border-t border-t-[#7289b4] bg-linear-to-b from-[#d2e1f5] via-[#c4d5ec] to-[#9fb6d4] pl-[165px] text-[#1e3a68]">
    <Zh t="列: 17" className="w-[40px]" /><SSep className="mr-[7px]" />
    <Zh t="字数" className="w-[29px]" /><SSep className="mr-[7px]" />
    <div className="h-[7px] w-[7px] rounded-[2px] border border-[#7688a8] bg-[#aebdd4]" /><Zh t="改写" className="ml-[2px] w-[30px]" /><SSep className="mr-[4px]" />
    <div className="h-[7px] w-[7px] rounded-[2px] border border-[#3a9a10] bg-[#55c81c]" /><Zh t="拼写检查" className="ml-[2px] w-[54px]" /><SSep className="mr-[6px]" />
    <Zh t="单位: 毫米" />
    <div className="ml-auto flex items-center">
      <div className="flex h-[21px] w-[22px] items-center justify-center border border-[#d08a2a] bg-linear-to-r from-[#fbe08a] via-[#fdf6dc] to-[#fbe08a]"><Ic w={12} h={14}><rect x=".5" y=".5" width="11" height="13" fill="#fff" stroke="#444" /><path d="M3 3h2M7 3h2M3 6h6M3 8h6M3 10h4" stroke="#777" /></Ic></div>
      <Ic w={13} h={12} className="ml-[5px]"><path d="M0 1.500h3M4 1.500h9M3 4.500h2M6 4.500h7M3 7.500h2M6 7.500h7M0 10.500h3M4 10.500h9" stroke="#333" strokeWidth="1.500" /></Ic>
      <Ic w={15} h={15} className="ml-[8px]"><path d="M.5.500h9l2 2v11H.500z" fill="#fff" stroke="#6f7f98" /><path d="M2 4h7M2 6h7M2 8h5" stroke="#8494ac" /><circle cx="10.500" cy="10.500" r="4.500" fill="#3a80d8" /><path d="M8 9q3-3 5 0l-3 4z" fill="#5cc05c" /></Ic>
      <SSep className="ml-[5px] mr-[2px]" /><Zh t="100 %" className="w-[33px]" />
      <Round />
      <div className="mx-[1px] flex w-[100px] items-center"><i className="ml-[2px] h-px w-[43px] bg-[#6c7f9f]" /><Ic w={12} h={12}><circle cx="6" cy="6" r="5.500" fill="#e8eff9" stroke="#7d8ca8" /></Ic><i className="h-px w-[42px] bg-[#6c7f9f]" /></div>
      <Round plus />
    </div>
    <div className="absolute left-0 top-[-5px] flex h-[26px] w-[158px] items-center gap-[1px] border border-white border-b-[#404040] border-r-[#404040] bg-[#d4d0c8] pl-[1px] shadow-[inset_-1px_-1px_0_#808080]">
      <ImeBtn className="w-[20px]"><span className="-mt-[2px] font-['Noto_Sans_CJK_SC',sans-serif] text-[17px] font-black leading-none text-[#f01010]">中</span></ImeBtn>
      <ImeBtn className="w-[72px]"><span className="-mt-[2px] font-['Noto_Sans_CJK_SC',sans-serif] text-[16px] leading-none text-black">极品五笔</span></ImeBtn>
      <ImeBtn className="w-[19px]"><Ic w={12} h={12}><path d="M7 0q5 2 4 7-3 6-10 4 8-2 6-11z" fill="#000" /></Ic></ImeBtn>
      <ImeBtn className="w-[19px]"><Ic w={10} h={8}><circle cx="2" cy="3" r="1.500" fill="none" stroke="#000" strokeWidth="1.300" /><path d="M7 1h2.500v3L7.500 7" stroke="#000" fill="none" strokeWidth="1.600" /></Ic></ImeBtn>
      <ImeBtn className="w-[20px]"><Ic w={16} h={11}><path d="M0 .5h16v10H0z" fill="#999" /><path d="M1 2.500h14M1 5.500h14M1 8.500h14" stroke="#fff" strokeWidth="1.500" strokeDasharray="2 1" /></Ic></ImeBtn>
    </div>
  </div>
);
const VBoxStatus = () => (
  <div className="flex h-[21px] shrink-0 items-center justify-end">
    <Cell className="w-[22px]"><Ic w={15} h={16}><path d="M1 3v10q6 4 12 0V3z" fill="#4aa3d8" stroke="#24608c" /><ellipse cx="7" cy="3" rx="6" ry="2.300" fill="#c5e9fa" stroke="#24608c" /><path d="M1 7q6 3 12 0M1 10q6 3 12 0" stroke="#d5effc" fill="none" /></Ic></Cell>
    <Cell className="w-[21px]"><Ic w={15} h={15}><circle cx="7.500" cy="7.500" r="7" fill="#d8d6d2" stroke="#a5a3a0" /><circle cx="7.500" cy="7.500" r="2" fill="#fff" stroke="#999" /></Ic></Cell>
    <Cell className="w-[20px]"><Ic w={15} h={15}><path d="M3 9 9 2q5-2 5 3L7 12l-3 1z" fill="#d3d8f0" stroke="#4b5580" /><path d="M4 11l-4 4" stroke="#4b5580" strokeWidth="2" /></Ic></Cell>
    <Cell className="w-[21px]"><Ic w={16} h={14}><rect x="6.500" y=".5" width="9" height="8" fill="#3f8fe0" stroke="#e8eef6" /><path d="M6 9.500h10" stroke="#555" /><rect x=".5" y="4.500" width="9" height="8" fill="#2b79d8" stroke="#fff" /><path d="M0 13.500h10" stroke="#555" /></Ic></Cell>
    <Cell className="w-[21px]"><Ic w={16} h={13}><path d="M.5 2.500h6l1-2h8v12H.500z" fill="#4fa8ec" stroke="#2a73ac" /><path d="M1 4.500h14" stroke="#c8eafc" /></Ic></Cell>
    <Cell className="w-[22px]"><Ic w={15} h={15}><rect x="1.500" y="1.500" width="12" height="12" fill="#8d97d4" stroke="#4a5398" strokeDasharray="2 1" strokeWidth="2" /><rect x="4" y="3" width="7" height="9" fill="#e4e7f8" /><text x="4.200" y="11" fontSize="9" fontWeight="bold" fill="#5660a8" fontFamily={SANS}>V</text></Ic></Cell>
    <div className="mr-[6px] h-[15px] w-[2px] border-l border-[#808080] bg-white" />
    <Cell className="w-[21px]"><Ic w={16} h={16}><ellipse cx="7" cy="8" rx="6.500" ry="7" fill="#b9c4da" stroke="#5e6a86" /><path d="M6 4h6v3q4 1 2 6l-4 3 1-4-4-1z" fill="#47b83a" stroke="#1f6a1c" strokeWidth=".8" /></Ic></Cell>
    <Cell className="w-[19px]"><Ic w={15} h={15}><rect x=".5" y=".5" width="14" height="14" fill="#eef3ea" stroke="#4d6048" /><path d="M5.500 3h4v4H12l-4.500 5L3 7h2.500z" fill="#5ad044" stroke="#1f6a1c" strokeWidth=".8" /></Ic></Cell>
    <span className="w-[58px] whitespace-nowrap font-['Liberation_Sans',sans-serif] text-[11.5px] leading-none text-black">Right Ctrl</span>
    <Ic w={11} h={11} className="mb-[-8px]"><path d="M0 11 11 0M4 11l7-7M8 11l3-3" stroke="#777" strokeWidth="1.400" /></Ic>
  </div>
);

export default function App() {
  return (
    <div className="flex h-[768px] w-[1366px] flex-col overflow-hidden bg-[#d4d0c8]">
      <TopBar />
      <div className="flex h-[752px] flex-col border border-[#982428]">
        <div className="flex h-[20px] shrink-0 items-center gap-[14px] pl-[7px] font-['Liberation_Sans',sans-serif] text-[11.5px] leading-none text-black">
          <span>Machine</span><span>View</span><span>Devices</span><span>Help</span>
        </div>
        <TaskBar />
        <Title />
        <Ribbon />
        <div className="flex h-[528px] shrink-0">
          <div className="flex w-[1238px] shrink-0 flex-col"><DocTabs /><DocArea /></div>
          <Pane />
        </div>
        <Status />
        <VBoxStatus />
      </div>
    </div>
  );
}
